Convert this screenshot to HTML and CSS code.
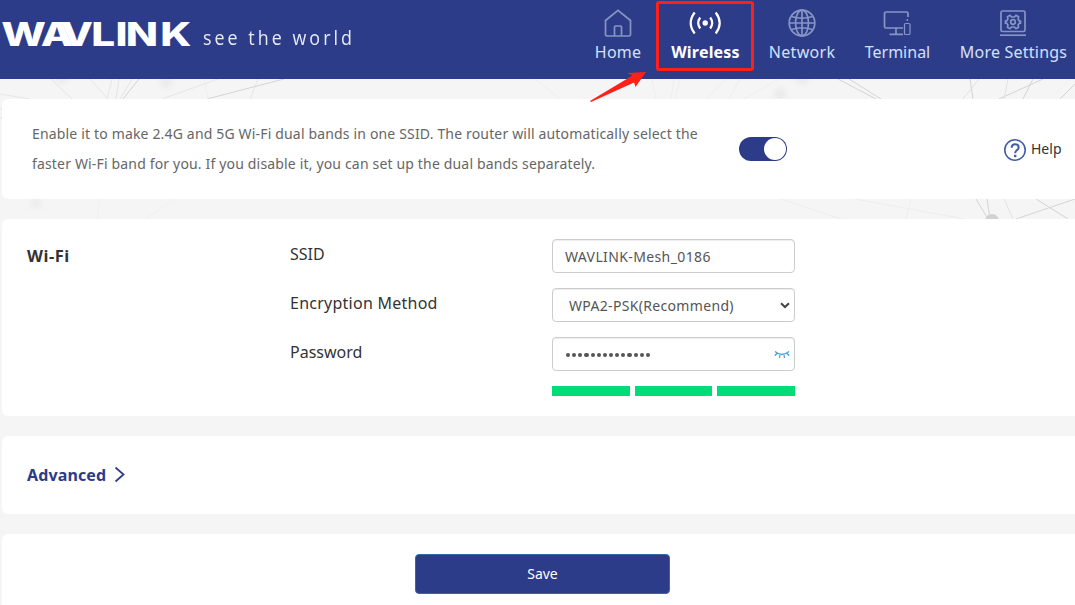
FILE: index.html
```html
<!DOCTYPE html>
<html lang="en">
<head>
<meta charset="utf-8">
<title>WAVLINK</title>
<link rel="stylesheet" href="styles.css">
</head>
<body>
<svg class="backdrop" width="1075" height="605" viewBox="0 0 1075 605" fill="none">
  <defs><filter id="soft" x="-1" y="-1" width="3" height="3"><feGaussianBlur stdDeviation="3"/></filter></defs>
  <g fill="#e9e9e9" filter="url(#soft)"><circle cx="62" cy="76" r="7"/><circle cx="166" cy="82" r="6"/><circle cx="36" cy="203" r="5"/><circle cx="780" cy="94" r="6"/><circle cx="802" cy="77" r="7"/></g>
  <g stroke="#e6e6e6"><path d="M51 79 72 99M90 79l18 20M112 79l-5 20M119 79l-3 20M132 79l-12 20M218 79l-56 20M0 94l30 5M0 109h2M258 79l-8 20M0 118h2"/></g>
  <g stroke="#d4d4d4"><path d="M139 79 123 99M284 79 207 99M838 79l38 20M849 79l32 20M970 79l3 20M1033 79l-10 20M1043 79l-44 20M1075 84l-15 15M976 199l12 20M987 199l3 20M1075 199l-59 20M1036 199l32 20"/></g>
  <g stroke="#e2e2e2"><path d="M979 79l-16 20M1008 79l-4 20M1004 199l9 20"/></g>
  <g stroke="#eeeeee"><path d="M535 79l25 20M204 79l4 20M652 79l4 20M674 79l-3 20M680 79l-5 20M725 79l-18 20M740 79l-11 20M779 79l-35 20M780 199l62 20M855 199l110 20M911 199l-5 20"/></g>
  <g stroke="#f1f1f1"><path d="M100 199l-3 20M175 199l-30 20"/></g>
  <circle cx="992" cy="221" r="7" fill="#d2d2d2"/>
</svg>

<header class="header">
  <div class="brand">
    <svg class="logo" width="192" height="44" viewBox="0 0 192 44"><text class="logo-text" transform="scale(1.28 1)" y="34" x="1 31.800 47.200 71.300 90.300 98.300 125.300">WAVLINK</text></svg>
    <span class="slogan">see the world</span>
  </div>
  <nav class="nav">
    <a class="nav-item home"><svg width="30" height="30" viewBox="0 0 30 30"><path d="M2.500 12.500 15 2.300 27.500 12.500V26.500q0 1.500-1.500 1.500H4q-1.500 0-1.500-1.500ZM11.500 27.500V19q0-1 1-1h5q1 0 1 1v8.500"/></svg><span>Home</span></a>
    <a class="nav-item wireless active"><svg width="34" height="30" viewBox="0.800 0 34 30"><circle cx="17" cy="15" r="2.700"/><path d="M12 9.500q-4 5.500 0 11M22 9.500q4 5.500 0 11M6.500 4.500q-8 10.500 0 21M27.500 4.500q8 10.500 0 21"/></svg><span>Wireless</span></a>
    <a class="nav-item network"><svg width="30" height="30" viewBox="0 0 30 30"><circle cx="15" cy="15" r="12.800"/><ellipse cx="15" cy="15" rx="6.500" ry="12.800"/><path d="M15 2v26M2 15h26M4.500 8.500q10.500 3.500 21 0M4.500 21.500q10.500-3.500 21 0"/></svg><span>Network</span></a>
    <a class="nav-item terminal"><svg width="30" height="30" viewBox="1 0 30 30"><path d="M26 9V5.500q0-1.500-1.500-1.500h-20Q2.500 4 2.500 5.500v13Q2.500 20 4 20h17M14 20v6M7.500 26.300h13.500"/><rect x="22.500" y="15.500" width="5.500" height="11" rx="1" stroke-width="1.200"/><path d="M25.300 11v2" stroke-width="1.400"/></svg><span>Terminal</span></a>
    <a class="nav-item settings"><svg width="30" height="30" viewBox="1 0 30 30"><rect x="3" y="3" width="24" height="20.500" rx="1.500"/><path d="M2 27.200h26"/><path d="M12 7.300 13.500 9h3L18 7.300l2.500 1.400-.4 2.300 1.400 2.200h1v2h-1l-1.400 1.800.4 2.300L18 20.700 16.500 19h-3L12 20.700l-2.500-1.400.4-2.300-1.400-1.800h-1v-2h1L9.900 11l-.4-2.300Z"/><circle cx="15" cy="14" r="2.300"/></svg><span>More Settings</span></a>
  </nav>
</header>
<div class="highlight"></div>
<svg class="pointer" width="60" height="34" viewBox="588 70 60 34"><path d="M590 101 632.500 75.500 627 73 646 72 635.500 87 634 82.500 591 102Z"/></svg>

<main class="content">
  <section class="card band">
    <p class="band-text">Enable it to make 2.4G and 5G Wi-Fi dual bands in one SSID. The router will automatically select the<br>faster Wi-Fi band for you. If you disable it, you can set up the dual bands separately.</p>
    <div class="toggle"><div class="knob"></div></div>
    <a class="help"><svg width="24" height="24" viewBox="0 0 24 24"><circle cx="12" cy="12" r="10.200"/><path d="M8.700 9.800Q8.700 6.300 12.200 6.300T15.700 9.500Q15.700 11 13.700 12.300 12.200 13.400 12.200 15.200" stroke-width="2"/><path d="M11 18h2.400" stroke-width="2.400"/></svg><span>Help</span></a>
  </section>

  <section class="card wifi">
    <h2 class="title">Wi-Fi</h2>
    <div class="form">
      <div class="row"><label class="label">SSID</label><div class="field">WAVLINK-Mesh_0186</div></div>
      <div class="row"><label class="label encryption">Encryption Method</label><div class="field select"><span>WPA2-PSK(Recommend)</span><svg width="10" height="7" viewBox="0 0 10 7"><path d="M1 1.200 5 5 9 1.200"/></svg></div></div>
      <div class="row"><label class="label">Password</label><div class="field secret"><span class="dots"><i></i><i></i><i></i><i></i><i></i><i></i><i></i><i></i><i></i><i></i><i></i><i></i><i></i><i></i></span><svg width="16" height="10" viewBox="0 0 16 10"><path d="M1 2.500Q8 8.500 15 2.500M3 4.500.8 6.800M13 4.500l2.200 2.300M6 6.200l-.6 2.600M10 6.200l.6 2.600"/></svg></div></div>
      <div class="strength"><span></span><span></span><span></span></div>
    </div>
  </section>

  <section class="card advanced"><h2 class="title link">Advanced</h2><svg width="12" height="16" viewBox="0 0 12 16"><path d="M1.500 .5 9.500 7.500 1.500 14.500"/></svg></section>

  <section class="card actions"><button class="save">Save</button></section>
</main>
</body>
</html>
```

FILE: styles.css
```css
* { box-sizing: border-box; }
body {
  margin: 0;
  height: 605px;
  overflow: hidden;
  position: relative;
  background: #f5f5f5;
  color: #333;
  font-family: "Noto Sans", "Open Sans", sans-serif;
}
.backdrop { position: absolute; left: 0; top: 0; z-index: -1; }
svg { display: block; flex: none; }

.header {
  height: 79px;
  display: flex;
  justify-content: space-between;
  background: #2d3c88;
  padding-right: 8px;
}
.brand { display: flex; padding-top: 12px; gap: 11px; }
.logo-text {
  font-family: Inter, sans-serif;
  font-weight: 800;
  font-size: 33px;
  fill: #fff;
}
.slogan {
  color: #e8ebf6;
  font-family: "Open Sans", sans-serif;
  font-size: 20px;
  line-height: 52px;
  letter-spacing: 3.4px;
  width: 170px;
  transform: scaleX(.893);
  transform-origin: left center;
  white-space: nowrap;
}
.nav { display: flex; gap: 30px; padding-top: 8px; }
.nav-item {
  display: flex;
  flex-direction: column;
  align-items: center;
  color: #d3e0fb;
  font-size: 16px;
  line-height: 24px;
  white-space: nowrap;
  gap: 2px;
}
.nav-item svg { fill: none; stroke: #8795c4; stroke-width: 1.7; }
.home { width: 46px; letter-spacing: .2px; }
.wireless { width: 69px; margin-right: -1px; letter-spacing: .2px; }
.network { width: 66px; letter-spacing: .3px; }
.terminal { width: 65px; }
.settings { width: 107px; letter-spacing: .22px; }
.nav-item.active { color: #fff; font-weight: 700; }
.nav-item.active svg { stroke: #fff; stroke-width: 2.2; }
.active circle { fill: #fff; stroke: none; }

.highlight {
  position: absolute;
  left: 656px;
  top: 1px;
  width: 98px;
  height: 70px;
  border: 3px solid #ff2118;
  border-radius: 3px;
}
.pointer { position: absolute; left: 588px; top: 70px; fill: #ff2118; }

.content {
  display: flex;
  flex-direction: column;
  gap: 20px;
  padding: 20px 0 0 2px;
}
.card { background: #fff; border-radius: 6px 0 0 6px; display: flex; }

.band { height: 100px; padding-left: 30px; align-items: center; }
.band-text {
  margin: 0;
  width: 707px;
  color: #666;
  font-size: 14px;
  line-height: 30px;
  letter-spacing: .165px;
  white-space: nowrap;
}
.toggle {
  width: 48px;
  height: 24px;
  border-radius: 12px;
  background: #2d3c88;
  padding: 1px;
  display: flex;
  justify-content: flex-end;
}
.knob { width: 22px; height: 22px; border-radius: 50%; background: #fff; }
.help {
  display: flex;
  align-items: center;
  margin-left: 216px;
  gap: 4px;
  font-size: 14px;
}
.help span { padding-bottom: 1px; }
.help svg { fill: none; stroke: #435da3; stroke-width: 1.6; margin-top: 2px; }

.wifi { height: 197px; padding: 20px 0 0 25px; }
.title { margin: 0; font-size: 16px; line-height: 34px; font-weight: 700; letter-spacing: .12px; }
.wifi .title { width: 262.5px; font-size: 16.5px; letter-spacing: .5px; }
.form { width: 505px; margin-left: .5px; }
.row { display: flex; height: 34px; margin-bottom: 15px; }
.label { width: 262px; font-size: 16px; line-height: 30px; white-space: nowrap; }
.encryption { letter-spacing: .25px; }
.field {
  width: 243px;
  height: 34px;
  border: 1px solid #ccc;
  border-radius: 4px;
  box-shadow: inset 0 1px 1px rgba(0, 0, 0, .075);
  padding: 0 4px 0 12px;
  display: flex;
  align-items: center;
  justify-content: space-between;
  color: #555;
  font-size: 14px;
  letter-spacing: .38px;
  white-space: nowrap;
}
.select { padding-left: 16px; letter-spacing: .33px; }
.select svg { fill: none; stroke: #444; stroke-width: 2; }
.secret svg { fill: none; stroke: #4aa0dc; stroke-width: 1.3; }
.dots { display: flex; gap: 2px; padding: 2px 0 0 1px; }
.dots i { width: 4.150px; height: 4.150px; border-radius: 50%; background: #555; }
.strength { display: flex; gap: 5px; margin-left: 262px; }
.strength span { flex: 1; height: 10px; background: #00dc78; }

.advanced { height: 78px; padding-left: 25px; align-items: center; gap: 8px; }
.link { color: #2d3c88; }
.advanced svg { fill: none; stroke: #2d3c88; stroke-width: 1.8; }

.actions { height: 90px; padding: 20px 0 0 413px; }
.save {
  width: 255px;
  height: 40px;
  border: 1px solid #3469a6;
  border-radius: 4px;
  background: #2d3c88;
  color: #fff;
  font-family: inherit;
  font-size: 14px;
  padding: 0 0 2px;
}
```
